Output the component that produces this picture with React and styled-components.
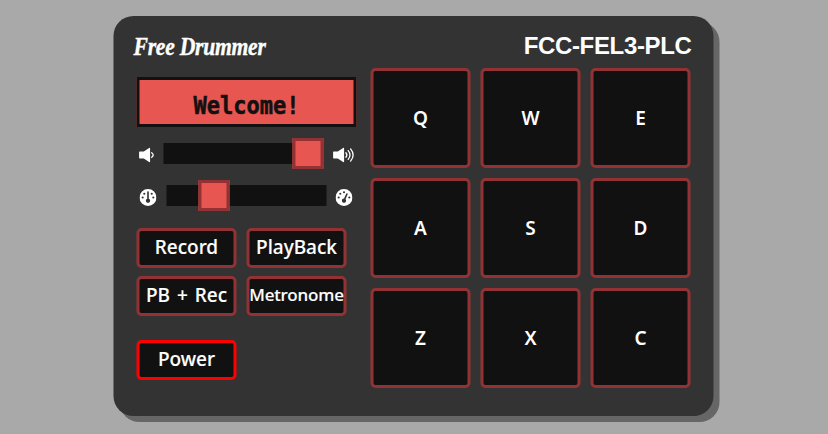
import React from "react";
import styled, { createGlobalStyle } from "styled-components";
import { FaGauge, FaGaugeHigh } from "react-icons/fa6";

const GlobalStyle = createGlobalStyle`
  *, *::before, *::after { box-sizing: border-box; }
  body {
    margin: 0;
    background: #a9a9a9;
    color: #fff;
    font-family: "Noto Sans", sans-serif;
    overflow: hidden;
  }
  button { font-family: inherit; color: inherit; padding: 0; margin: 0; }
`;

const Page = styled.main`
  display: flex;
  justify-content: center;
  height: 434px;
  padding-top: 16px;
`;

const Machine = styled.div`
  width: 600px;
  height: 400px;
  padding: 10px 23px 0 20px;
  border-radius: 20px;
  background: #333;
  box-shadow: 6px 6px #666;
  transform: translateX(-0.5px);
`;

const Header = styled.header`
  display: flex;
  justify-content: space-between;
  height: 42px;
`;

const Logo = styled.h1`
  margin: 5px 0 0;
  font: italic bold 25px/32px "Liberation Serif", serif;
  letter-spacing: -0.3px;
  white-space: nowrap;
  transform: scaleX(0.865);
  transform-origin: left;
  -webkit-text-stroke: 0.4px;
`;

const Model = styled.h2`
  margin: 4px -1px 0 0;
  font: bold 24px/32px "Liberation Sans", sans-serif;
  letter-spacing: -0.35px;
  white-space: nowrap;
`;

const Body = styled.div`
  display: flex;
  justify-content: space-between;
  padding-left: 3px;
`;

const Controls = styled.section`
  display: flex;
  flex-direction: column;
  width: 220px;
  padding-top: 9px;
`;

const Display = styled.div`
  display: flex;
  justify-content: center;
  height: 50px;
  border: 3px solid #111;
  background: #e75651;
  color: #111;
`;

const DisplayText = styled.span`
  font: bold 22px/44px "DejaVu Sans Mono", monospace;
  transform: translateY(4.5px) scaleY(1.1);
  -webkit-text-stroke: 0.5px;
`;

const SliderRow = styled.div`
  display: flex;
  align-items: center;
  height: 31px;
  margin-top: 11px;
  padding-left: ${(p) => p.$inset}px;
  font-size: 17px;
`;

const DialIcon = styled.span`
  display: flex;
  padding-top: 3px;
`;

const SpeakerIcon = styled.svg`
  flex: none;
  height: 16px;
  margin-top: 3px;
  fill: none;
  stroke: #fff;
  stroke-width: 1.3;
  stroke-linecap: round;
`;

const Track = styled.div`
  flex: none;
  width: 160px;
  height: 21px;
  margin: 0 ${(p) => p.$after}px 0 ${(p) => p.$before}px;
  padding-left: ${(p) => p.$value}px;
  background: #111;
`;

const Thumb = styled.div`
  width: 31px;
  height: 31px;
  margin-top: -5px;
  border: 3px solid #933234;
  background: #e75651;
`;

const Buttons = styled.div`
  display: grid;
  grid-template-columns: 100px 100px;
  gap: 8px 10px;
  margin: 17px 0 24px;
`;

const Button = styled.button`
  display: flex;
  align-items: center;
  justify-content: center;
  width: 100px;
  height: 40px;
  padding-bottom: 2px;
  border: 3px solid ${(p) => (p.$on ? "#f00" : "#933234")};
  border-radius: 5px;
  background: #111;
  font-size: ${(p) => p.$size || 19}px;
  font-weight: 500;
  line-height: 30px;
  letter-spacing: ${(p) => (p.$size ? -0.15 : 0)}px;
  word-spacing: 2px;
  white-space: nowrap;
  -webkit-text-stroke: 0.15px;
`;

const Pads = styled.section`
  display: grid;
  grid-template-columns: repeat(3, 100px);
  grid-auto-rows: 100px;
  gap: 10px;
`;

const Pad = styled(Button)`
  height: 100px;
  padding-bottom: 0;
  font-weight: 600;
  -webkit-text-stroke: 0;
`;

const keys = ["Q", "W", "E", "A", "S", "D", "Z", "X", "C"];

function Speaker({ loud }) {
  const width = loud ? 23 : 16;
  return (
    <SpeakerIcon width={width} viewBox={`0 0 ${width} 16`}>
      <path d="M1.3 4.5h4L10.6 1q1-.5 1 .5v13q0 1-1 .5L5.3 11.5h-4q-.7 0-.7-.7V5.2q0-.7.7-.7Z" fill="#fff" stroke="none" />
      {loud ? (
        <>
          <path d="M13.4 5.7q2 2.3 0 4.6" />
          <path d="M15.7 3.6q3.6 4.4 0 8.8" />
          <path d="M18.1 1.9q5 6.1 0 12.2" />
        </>
      ) : (
        <path d="M13.2 5.7q3 2.3 0 4.6" />
      )}
    </SpeakerIcon>
  );
}

export default function App() {
  return (
    <>
      <GlobalStyle />
      <Page>
        <Machine>
          <Header>
            <Logo>Free Drummer</Logo>
            <Model>FCC-FEL3-PLC</Model>
          </Header>
          <Body>
            <Controls>
              <Display><DisplayText>Welcome!</DisplayText></Display>
              <SliderRow $inset={2}>
                <Speaker />
                <Track $value={129} $before={9} $after={9}><Thumb /></Track>
                <Speaker loud />
              </SliderRow>
              <SliderRow $inset={3}>
                <DialIcon><FaGauge /></DialIcon>
                <Track $value={32} $before={10} $after={9}><Thumb /></Track>
                <DialIcon><FaGaugeHigh /></DialIcon>
              </SliderRow>
              <Buttons>
                <Button>Record</Button>
                <Button>PlayBack</Button>
                <Button>PB + Rec</Button>
                <Button $size={17}>Metronome</Button>
              </Buttons>
              <Button $on>Power</Button>
            </Controls>
            <Pads>
              {keys.map((key) => <Pad key={key}>{key}</Pad>)}
            </Pads>
          </Body>
        </Machine>
      </Page>
    </>
  );
}
